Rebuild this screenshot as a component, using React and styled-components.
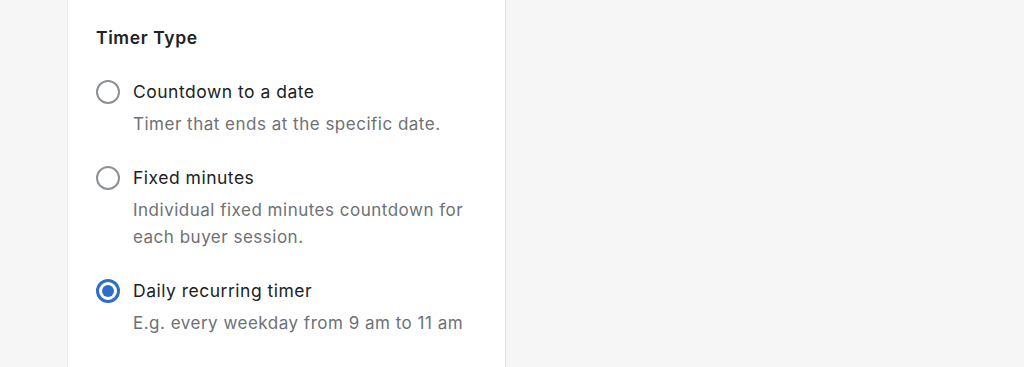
import React, { useState } from "react";
import styled, { createGlobalStyle } from "styled-components";

const GlobalStyle = createGlobalStyle`
  html, body {
    margin: 0;
    padding: 0;
    background: #f6f6f6;
    font-family: Inter, "Noto Sans", "Liberation Sans", sans-serif;
    -webkit-font-smoothing: antialiased;
  }
`;

const options = [
  {
    id: "date",
    label: "Countdown to a date",
    help: "Timer that ends at the specific date.",
  },
  {
    id: "fixed",
    label: "Fixed minutes",
    help: "Individual fixed minutes countdown for each buyer session.",
  },
  {
    id: "daily",
    label: "Daily recurring timer",
    help: "E.g. every weekday from 9 am to 11 am",
  },
];

export default function App() {
  const [value, setValue] = useState("daily");
  return (
    <>
      <GlobalStyle />
      <StyledPage>
        <StyledCard>
          <StyledHeading>Timer Type</StyledHeading>
          <StyledList>
            {options.map((opt) => (
              <StyledOption key={opt.id} onClick={() => setValue(opt.id)}>
                <StyledRadio $checked={value === opt.id} />
                <StyledTexts>
                  <StyledLabel>{opt.label}</StyledLabel>
                  <StyledHelp>{opt.help}</StyledHelp>
                </StyledTexts>
              </StyledOption>
            ))}
          </StyledList>
        </StyledCard>
      </StyledPage>
    </>
  );
}

const StyledPage = styled.div`
  display: flex;
  padding-left: 68px;
  height: 367px;
  overflow: hidden;
`;

const StyledCard = styled.div`
  width: 437px;
  background: #ffffff;
  box-shadow: 0 0 0 1px rgba(0, 0, 0, 0.04), 1px 0 2px rgba(0, 0, 0, 0.06);
  padding: 27px 28px 0 28px;
  box-sizing: border-box;
`;

const StyledHeading = styled.div`
  font-size: 17.5px;
  font-weight: 600;
  color: #202223;
  line-height: 22px;
  letter-spacing: 0.6px;
`;

const StyledList = styled.div`
  display: flex;
  flex-direction: column;
  gap: 28px;
  margin-top: 31px;
`;

const StyledOption = styled.label`
  display: flex;
  gap: 13px;
  cursor: pointer;
`;

const StyledRadio = styled.span`
  flex: none;
  width: 24px;
  height: 24px;
  border-radius: 50%;
  box-sizing: border-box;
  border: ${(p) => (p.$checked ? "3px solid #2c6ecb" : "2.5px solid #8c9196")};
  display: flex;
  align-items: center;
  justify-content: center;
  &::after {
    content: "";
    display: ${(p) => (p.$checked ? "block" : "none")};
    width: 12px;
    height: 12px;
    border-radius: 50%;
    background: #2c6ecb;
  }
`;

const StyledTexts = styled.div`
  display: flex;
  flex-direction: column;
  gap: 7px;
`;

const StyledLabel = styled.div`
  font-size: 17.5px;
  line-height: 24px;
  color: #202223;
  letter-spacing: 0.5px;
`;

const StyledHelp = styled.div`
  font-size: 17px;
  line-height: 27px;
  color: #6d7175;
  letter-spacing: 0.5px;
  max-width: 340px;
`;
